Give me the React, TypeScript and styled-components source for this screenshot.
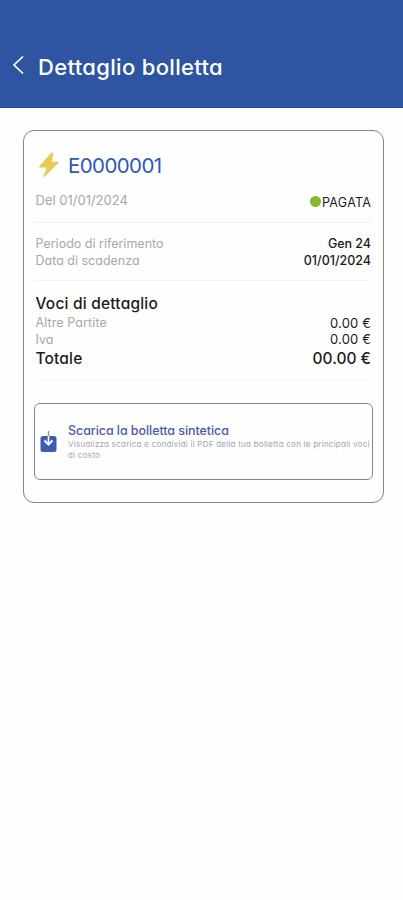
import React from "react";
import styled, { createGlobalStyle } from "styled-components";

const GlobalStyle = createGlobalStyle`
  * { box-sizing: border-box; }
  body {
    margin: 0;
    background: #fefefe;
    font-family: Inter, "Liberation Sans", sans-serif;
    font-feature-settings: "cv11", "ss03";
  }
`;

const Screen = styled.main`
  height: 900px;
  overflow: hidden;
`;

const Header = styled.header`
  display: flex;
  align-items: center;
  height: 108px;
  padding: 27px 12px 0;
  gap: 13px;
  background: #2e54a2;
  border-bottom: 1px solid #2a4a92;
`;

const BackIcon = styled.svg`
  width: 13px;
  height: 20px;
  margin-bottom: 4px;
`;

const Title = styled.h1`
  margin: 0;
  font-size: 22px;
  line-height: 28px;
  font-weight: 500;
  letter-spacing: 0.33px;
  color: #fff;
`;

const Card = styled.section`
  width: 361px;
  height: 373px;
  margin: 22px 0 0 23px;
  padding: 20px 11px 0 10px;
  border: 1px solid #858585;
  border-radius: 11px;
`;

const BillHeading = styled.div`
  display: flex;
  align-items: center;
  height: 28px;
  padding-left: 4px;
  gap: 8px;
`;

const Section = styled.div<{ $height: number; $top: number; $line: string }>`
  height: ${(p) => p.$height}px;
  padding: ${(p) => p.$top}px 1px 0 1.5px;
  border-bottom: 1px solid ${(p) => p.$line};
`;

const Row = styled.div<{ $height: number }>`
  display: flex;
  align-items: center;
  justify-content: space-between;
  height: ${(p) => p.$height}px;
`;

const Text = styled.span<{ $size: number; $color: string; $weight?: number; $spacing?: number }>`
  font-size: ${(p) => p.$size}px;
  font-weight: ${(p) => p.$weight ?? 400};
  letter-spacing: ${(p) => p.$spacing ?? 0}px;
  margin-right: ${(p) => -(p.$spacing ?? 0)}px;
  color: ${(p) => p.$color};
  white-space: nowrap;
`;

const Status = styled.div`
  display: flex;
  align-items: center;
  padding-top: 5px;
`;

const Dot = styled.i`
  width: 11px;
  height: 11px;
  margin: -3px 1px 0 0;
  border-radius: 50%;
  background: #86b92f;
`;

const Download = styled.button`
  display: flex;
  width: 339px;
  height: 77px;
  margin-top: 23px;
  padding: 18px 0 0 5px;
  gap: 11px;
  border: 1px solid #7f86ad;
  border-radius: 6px;
  background: transparent;
  font: inherit;
  font-feature-settings: inherit;
  text-align: left;
`;

const DownloadIcon = styled.svg`
  flex: none;
  width: 17px;
  height: 21px;
  margin-top: 9px;
`;

const DownloadText = styled.span`
  display: flex;
  flex-direction: column;
  padding-top: 1px;
  line-height: 16px;
`;

const Hint = styled.span`
  font-size: 8px;
  line-height: 11px;
  letter-spacing: 0.245px;
  color: #a3a5aa;
  white-space: nowrap;
`;

const gray = "#a6a8ad";
const black = "#1b1b1b";

export default function App() {
  return (
    <>
      <GlobalStyle />
      <Screen>
        <Header>
          <BackIcon viewBox="0 0 13 20" fill="none" stroke="#fff" strokeWidth="1.7">
            <path d="M11 1.5 2 10l9 8.5" />
          </BackIcon>
          <Title>Dettaglio bolletta</Title>
        </Header>
        <Card>
          <BillHeading>
            <svg width="22" height="26" viewBox="0 0 22 26" fill="#e6cb59">
              <path d="M13.500 .5 1.300 14.300q-.8 1.200.6 1.200h6.600L5.500 24q-.3 1.500 1 .8L20.500 11q.8-1.300-.7-1.300h-6.100L15.200 1.500Q15.200 0 13.500 .5Z" />
            </svg>
            <Text $size={20.5} $color="#3156b4" $spacing={-0.6}>E0000001</Text>
          </BillHeading>
          <Section $height={44} $top={11} $line="#efefef">
            <Row $height={20}>
              <Text $size={13} $color={gray}>Del 01/01/2024</Text>
              <Status>
                <Dot />
                <Text $size={12.5} $color={black} $spacing={0.3}>PAGATA</Text>
              </Status>
            </Row>
          </Section>
          <Section $height={58} $top={12} $line="#f3f3f3">
            <Row $height={17}>
              <Text $size={12.5} $color={gray}>Periodo di riferimento</Text>
              <Text $size={12.5} $color={black} $weight={500} $spacing={-0.05}>Gen 24</Text>
            </Row>
            <Row $height={17}>
              <Text $size={12.5} $color={gray}>Data di scadenza</Text>
              <Text $size={12.5} $color={black} $weight={500}>01/01/2024</Text>
            </Row>
          </Section>
          <Section $height={99} $top={12} $line="#f5f5f5">
            <Row $height={21}>
              <Text $size={15.5} $color={black} $weight={500} $spacing={0.2}>Voci di dettaglio</Text>
            </Row>
            <Row $height={17}>
              <Text $size={12.5} $color={gray} $spacing={0.1}>Altre Partite</Text>
              <Text $size={13} $color={black} $spacing={0.2}>0.00 €</Text>
            </Row>
            <Row $height={16}>
              <Text $size={12.5} $color={gray}>Iva</Text>
              <Text $size={13} $color={black} $spacing={0.2}>0.00 €</Text>
            </Row>
            <Row $height={22}>
              <Text $size={15.5} $color={black} $weight={500} $spacing={0.15}>Totale</Text>
              <Text $size={15.5} $color={black} $weight={500}>00.00 €</Text>
            </Row>
          </Section>
          <Download>
            <DownloadIcon viewBox="0 0 17 21">
              <rect x=".5" y="5" width="16" height="16" rx="2.500" fill="#3f5bb1" />
              <path d="M8.500 0v13" stroke="#9097ab" strokeWidth="1.500" />
              <path d="M8.500 5v8" stroke="#fff" strokeWidth="1.500" />
              <path d="m4.500 9.500 4 4 4-4" stroke="#fff" strokeWidth="2" fill="none" />
            </DownloadIcon>
            <DownloadText>
              <Text $size={12.5} $color="#485aa9" $weight={500} $spacing={-0.07}>Scarica la bolletta sintetica</Text>
              <Hint>
                Visualizza scarica e condividi il PDF della tua bolletta con le principali voci
                <br />
                di costo
              </Hint>
            </DownloadText>
          </Download>
        </Card>
      </Screen>
    </>
  );
}
